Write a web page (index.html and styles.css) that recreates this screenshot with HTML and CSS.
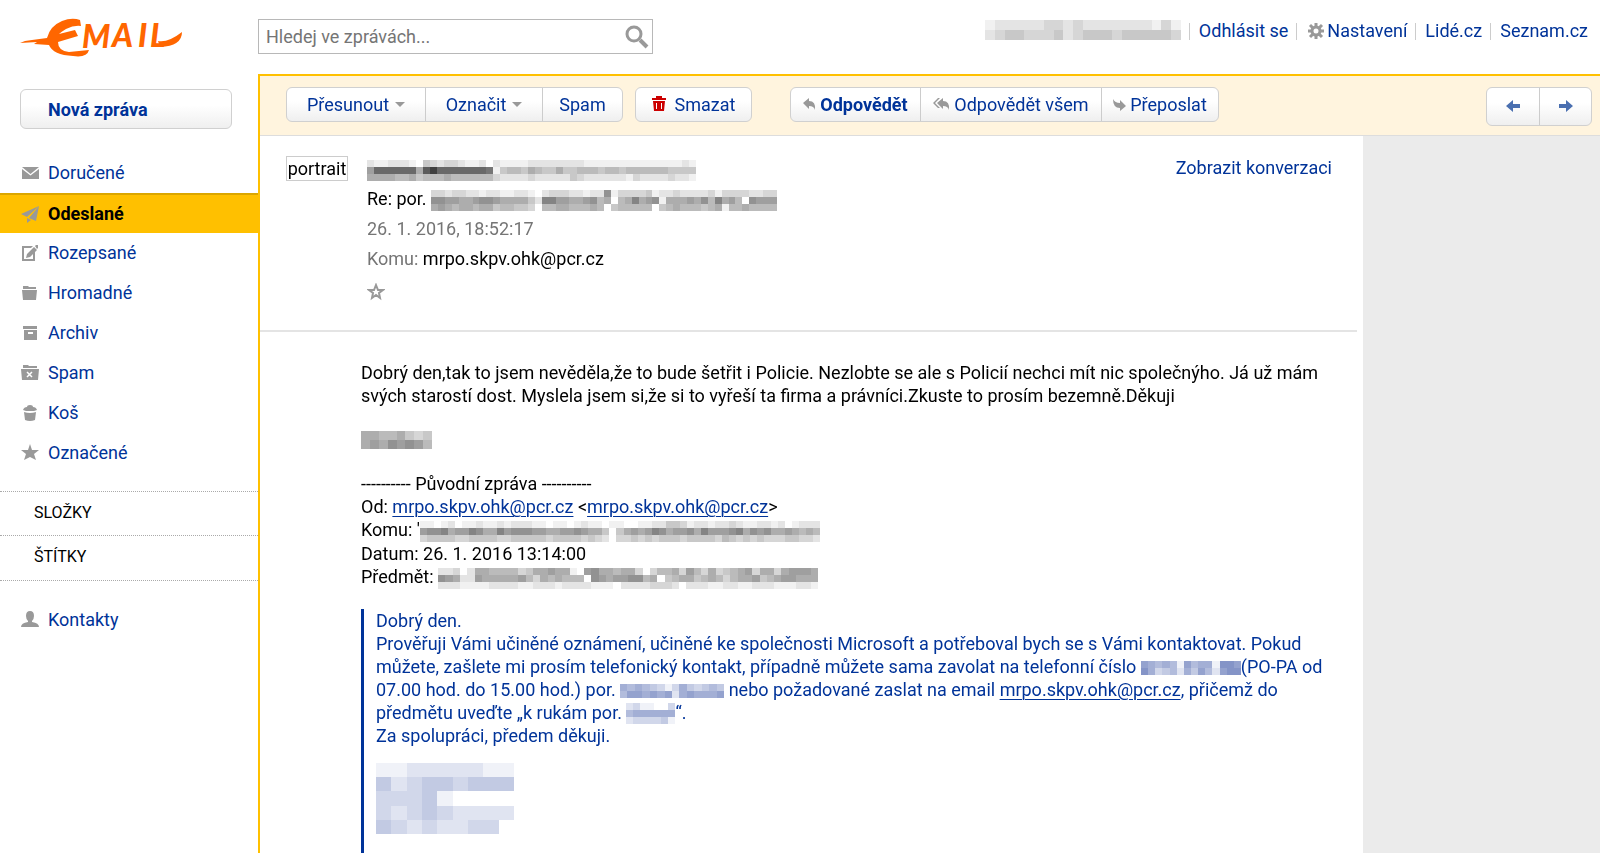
FILE: index.html
```
<!DOCTYPE html>
<html lang="cs">
<head>
    <meta charset="UTF-8">
    <meta name="viewport" content="width=device-width, initial-scale=1.0">
    <title>Odeslané - Email</title>
    <link rel="stylesheet" href="styles.css">
</head>
<body>
    <aside class="sidebar">
        <a class="logo" href="#" aria-label="Email">
            <svg width="164" height="44" viewBox="0 0 164 44" xmlns="http://www.w3.org/2000/svg">
                <path d="M0 28 L5 26 L12 25 L27 23 Q30 11 42 6 Q52 2 60 5 L61 11 Q54 10 46 14 Q41 17 39 19 L55 15 L58 21 L38 27 Q38 36 49 37 L69 35 Q67 43 53 41 Q33 40 29 30 L14 29 L17 27 Z"/>
                <text font-size="32"><tspan x="62" y="33">M</tspan><tspan x="92" y="32">A</tspan><tspan x="118" y="32">I</tspan><tspan x="130" y="32">L</tspan></text>
                <path d="M138 26 Q148 28 162 17 Q162 31 140 32 Z"/>
            </svg>
        </a>
        <button class="compose">Nová zpráva</button>
        <nav>
            <ul class="folders">
                <li><a href="#"><svg class="icon" viewBox="0 0 18 18"><path d="M1 3h17L9.500 10zM1 5l8.500 6.500L18 5v10H1z"/></svg>Doručené</a></li>
                <li class="active"><a href="#"><svg class="icon" viewBox="0 0 18 18"><path d="M0 9L18 1L6 12zM18 1L15 16L8 13zM6 13l4 2-4 3z"/></svg>Odeslané</a></li>
                <li><a href="#"><svg class="icon" viewBox="0 0 18 18"><path d="M1 2h11l-2 2H3v11h9V9l2-2v10H1zM5 14l1-4 7-7 3 3-7 7zM14 2l1-1h2v3l-1 1z"/></svg>Rozepsané</a></li>
                <li><a href="#"><svg class="icon" viewBox="0 0 18 18"><path d="M2 2h5l1 1h7v2H2zM1 6h15l-1 10H2z"/></svg>Hromadné</a></li>
                <li><a href="#"><svg class="icon" viewBox="0 0 18 18"><path d="M2 2h14v3H2z"/><path fill-rule="evenodd" d="M3 6h13v10H3zM7 8v2h5V8z"/></svg>Archiv</a></li>
                <li><a href="#"><svg class="icon" viewBox="0 0 18 18"><path d="M2 1h5l1 1h8v2H2zM0 5h18l-1 11H1z"/><path class="cut" d="M6 8l5 5M11 8l-5 5"/></svg>Spam</a></li>
                <li><a href="#"><svg class="icon" viewBox="0 0 18 18"><path d="M2 6q1-3 4-3 0-2 3-2t3 2q3 0 4 3l-3 1H5zM3 8q6 2 12 0l-1 8q-5 2-10 0z"/></svg>Koš</a></li>
                <li><a href="#"><svg class="icon" viewBox="0 0 18 18"><path d="M9 0l2 6h7l-5 4 2 6-6-3-6 3 2-6-5-4h7z"/></svg>Označené</a></li>
            </ul>
            <a class="section" href="#">SLOŽKY</a>
            <a class="section last" href="#">ŠTÍTKY</a>
            <ul class="folders">
                <li><a href="#"><svg class="icon" viewBox="0 0 18 18"><path d="M5 5q0-5 4-5t4 5q0 3-2 5v1q7 1 7 5H0q0-4 7-5v-1Q5 8 5 5z"/></svg>Kontakty</a></li>
            </ul>
        </nav>
    </aside>

    <div class="page">
        <header class="topbar">
            <form class="search">
                <input type="text" placeholder="Hledej ve zprávách..." aria-label="Hledej ve zprávách">
                <button type="button" aria-label="Hledat">
                    <svg width="24" height="24" viewBox="0 0 24 24"><circle cx="9" cy="9" r="7"/><path class="handle" d="M15 15l7 7"/></svg>
                </button>
            </form>
            <div class="user-links">
                <canvas class="mosaic user" data-rows="12222233232222222131|23443334234443444443"></canvas>
                <a href="#">Odhlásit se</a>
                <a href="#"><svg class="gear" viewBox="0 0 16 16"><circle cx="8" cy="8" r="4"/><path d="M8 0v4M8 12v4M0 8h4M12 8h4M2 2l3 3M11 11l3 3M14 2l-3 3M5 11l-3 3"/></svg>Nastavení</a>
                <a href="#">Lidé.cz</a>
                <a href="#">Seznam.cz</a>
            </div>
        </header>

        <main>
            <div class="toolbar">
                <div class="group">
                    <button class="move">Přesunout<i class="caret"></i></button>
                    <button class="mark">Označit<i class="caret"></i></button>
                    <button class="spam">Spam</button>
                </div>
                <div class="group">
                    <button class="delete"><svg width="14" height="16" viewBox="0 0 14 16"><path d="M0 2h4V0h6v2h4v2H0z"/><path fill-rule="evenodd" d="M1 5h12l-1 10H2zM4 7v6h1V7zM9 7v6h1V7z"/></svg>Smazat</button>
                </div>
                <div class="group replies">
                    <button class="reply"><svg width="13" height="13" viewBox="0 0 13 13"><path d="M0 5l6-5v3q7 0 6 9-1-4-6-4v3z"/></svg>Odpovědět</button>
                    <button class="reply-all"><svg width="17" height="13" viewBox="0 0 17 13"><path d="M4 5l6-5v3q7 0 6 9-1-4-6-4v3z"/><path d="M5 0h2L2 5l5 5H5L0 5z"/></svg>Odpovědět všem</button>
                    <button class="forward"><svg width="13" height="13" viewBox="0 0 13 13"><path d="M13 8l-6 5v-3Q0 10 0 1q2 4 7 4V2z"/></svg>Přeposlat</button>
                </div>
                <div class="group pager">
                    <button aria-label="Předchozí"><svg width="14" height="12" viewBox="0 0 14 12"><path d="M0 6l7-6v4h7v4H7v4z"/></svg></button>
                    <button aria-label="Další"><svg width="14" height="12" viewBox="0 0 14 12"><path d="M14 6L7 0v4H0v4h7v4z"/></svg></button>
                </div>
            </div>

            <div class="content">
                <article class="message">
                    <div class="message-head">
                        <div class="portrait">portrait</div>
                        <div class="meta">
                            <div><canvas class="mosaic sender" data-rows="21122210432332112021111222222221111111111111121|7bbbbbb6cebbbbbbba1455465446445554554555555444432|66665564555655555532222322222432222221322223221"></canvas></div>
                            <div>Re: por. <canvas class="mosaic subject" data-rows="33233221221122102333221228133334122322223133332233|88776678876666429977667856056967816667685967508777|67656656645544305566555650455555045655545615565555"></canvas></div>
                            <div class="muted">26. 1. 2016, 18:52:17</div>
                            <div><span class="muted">Komu:</span> mrpo.skpv.ohk@pcr.cz</div>
                            <button class="star" aria-label="Označit hvězdičkou"><svg width="18" height="18" viewBox="0 0 18 18"><path d="M9 2l2 5h5l-4 3 1 5-4-3-4 3 1-5-4-3h5z"/></svg></button>
                        </div>
                        <a class="conversation" href="#">Zobrazit konverzaci</a>
                    </div>

                    <div class="message-body">
                        <p>Dobrý den,tak to jsem nevěděla,že to bude šetřit i Policie. Nezlobte se ale s Policií nechci mít nic společnýho. Já už mám<br>
                        svých starostí dost. Myslela jsem si,že si to vyřeší ta firma a právníci.Zkuste to prosím bezemně.Děkuji</p>
                        <p class="signed"><canvas class="mosaic name" data-rows="66556434|67687875"></canvas></p>
                        <p>---------- Původní zpráva ----------<br>
                        Od: <a href="#">mrpo.skpv.ohk@pcr.cz</a> &lt;<a href="#">mrpo.skpv.ohk@pcr.cz</a>&gt;<br>
                        Komu: '<canvas class="mosaic recipient" data-rows="110120112112122211011012110110011224431221223211221201222|788967798669788877667787664046767986778697778968786676565|344443344443344444344443432033434344434444354343433344332"></canvas><br>
                        Datum: 26. 1. 2016 13:14:00<br>
                        Předmět: <canvas class="mosaic original" data-rows="2230266555534667661078665663035563753634567366367776|8762276666675365655508767788560456645653566745677666|2221111222211222122221110222233320222112211222111221222"></canvas></p>
                        <blockquote>
                            <p>Dobrý den.<br>
                            Prověřuji Vámi učiněné oznámení, učiněné ke společnosti Microsoft a potřeboval bych se s Vámi kontaktovat. Pokud<br>
                            můžete, zašlete mi prosím telefonický kontakt, případně můžete sama zavolat na telefonní číslo <canvas class="mosaic blue phone" data-rows="76565175661887|86345264752788"></canvas>(PO-PA od<br>
                            07.00 hod. do 15.00 hod.) por. <canvas class="mosaic blue officer" data-rows="65654313643454|577676726766676"></canvas> nebo požadované zaslat na email <a href="#">mrpo.skpv.ohk@pcr.cz</a>, přičemž do<br>
                            předmětu uveďte „k rukám por. <canvas class="mosaic blue surname" data-rows="2311003|5666666|2333341"></canvas>“.<br>
                            Za spolupráci, předem děkuji.</p>
                            <canvas class="mosaic blue signature" data-rows="112222211|423443444|333410000|323432222|432322330"></canvas>
                        </blockquote>
                    </div>
                </article>
            </div>
        </main>
    </div>

    <script src="script.js"></script>
</body>
</html>
```
FILE: styles.css
```
* {
    box-sizing: border-box;
}

body {
    margin: 0;
    display: flex;
    min-height: 100vh;
    background: #fff;
    color: #000;
    font-family: Roboto, "Liberation Sans", sans-serif;
    font-size: 18px;
    line-height: 23px;
}

a {
    color: #039;
    text-decoration: none;
}

button {
    font: inherit;
    color: #039;
    cursor: pointer;
}

ul,
p,
blockquote {
    margin: 0;
    padding: 0;
}

/* Sidebar */
.sidebar {
    flex: 0 0 258px;
    padding-top: 15px;
}

.logo {
    display: block;
    height: 44px;
    margin-left: 20px;
}

.logo svg {
    overflow: visible;
    fill: #f60;
    font-family: Lato, sans-serif;
    font-weight: 900;
    font-style: italic;
}

.compose {
    display: block;
    width: 212px;
    height: 40px;
    margin: 30px 0 24px 20px;
    padding: 0 27px;
    border: 1px solid #d0d0d0;
    border-radius: 6px;
    background: linear-gradient(#fff 40%, #efefef);
    font-weight: bold;
    text-align: left;
}

.folders {
    list-style: none;
}

.folders a {
    display: flex;
    align-items: center;
    gap: 9px;
    height: 40px;
    padding: 0 0 1px 21px;
}

.folders .active a {
    background: #ffc000;
    border-top: 2px solid #dba600;
    color: #000;
    font-weight: bold;
}

.icon {
    width: 18px;
    height: 18px;
    fill: #999;
}

.icon .cut {
    stroke: #fff;
    stroke-width: 1.5;
}

.section {
    display: block;
    height: 44px;
    padding: 9px 0 0 34px;
    border-top: 1px dotted #aaa;
    color: #000;
    font-size: 16px;
}

.folders + .section {
    margin-top: 18px;
}

.section.last {
    height: 46px;
    border-bottom: 1px dotted #aaa;
    margin-bottom: 19px;
}

/* Top bar */
.page {
    flex: 1;
    display: flex;
    flex-direction: column;
    min-width: 0;
}

.topbar {
    display: flex;
    justify-content: space-between;
    height: 74px;
    padding: 19px 12px 0 0;
}

.search {
    display: flex;
    width: 395px;
    height: 35px;
    border: 1px solid #b8b8b8;
}

.search input {
    flex: 1;
    min-width: 0;
    padding: 0 7px;
    border: 0;
    outline: none;
    font: inherit;
}

.search input::placeholder {
    color: #757575;
}

.search button {
    width: 30px;
    padding: 5px 0 0;
    border: 0;
    background: none;
}

.search svg {
    fill: none;
    stroke: #999;
    stroke-width: 3;
}

.search .handle {
    stroke-width: 4;
}

.user-links {
    display: flex;
    height: 24px;
}

.user-links a {
    display: flex;
    align-items: center;
    line-height: 24px;
}

.user-links a::before {
    content: "";
    width: 1px;
    height: 17px;
    margin: 0 9px 0 8px;
    background: #ccc;
}

.gear {
    width: 16px;
    height: 16px;
    margin: 0 3px 0 2px;
    fill: none;
    stroke: #999;
    stroke-width: 3;
}

/* Toolbar */
main {
    flex: 1;
    display: flex;
    flex-direction: column;
    border-top: 2px solid #ffc000;
    border-left: 2px solid #ffc000;
}

.toolbar {
    display: flex;
    gap: 12px;
    height: 60px;
    padding: 11px 8px 0 26px;
    background: #fff4de;
    border-bottom: 1px solid #ddd;
}

.group {
    display: flex;
    height: 35px;
    border: 1px solid #d0d0d0;
    border-radius: 6px;
    background: linear-gradient(#fff 40%, #efefef);
}

.group button {
    display: flex;
    align-items: center;
    justify-content: center;
    padding: 0 0 1px;
    border: 0;
    background: none;
    white-space: nowrap;
}

.group button + button {
    border-left: 1px solid #ccc;
}

.group svg {
    fill: #999;
}

.move {
    width: 138px;
}

.mark {
    width: 117px;
}

.spam {
    width: 80px;
}

.group .delete {
    width: 115px;
    gap: 9px;
}

.group .delete svg {
    fill: #c00;
}

.replies {
    margin-left: 26px;
}

.replies button {
    gap: 4px;
}

.reply {
    width: 129px;
    font-weight: bold;
}

.reply-all {
    width: 181px;
}

.forward {
    width: 117px;
}

.caret {
    margin-left: 6px;
    border: 5px solid transparent;
    border-top-color: #999;
    border-bottom: 0;
}

.pager {
    height: 39px;
    margin-left: auto;
}

.pager button {
    width: 52px;
}

.group.pager svg {
    fill: #4a6fb0;
}

/* Message */
.content {
    flex: 1;
    display: flex;
    padding-right: 237px;
    background: linear-gradient(#ebebeb, #ebebeb) right / 237px 100% no-repeat;
}

.message {
    flex: 1;
    display: flex;
    flex-direction: column;
    min-width: 0;
}

.message-head {
    display: flex;
    align-items: flex-start;
    height: 196px;
    margin-right: 6px;
    padding: 20px 25px 0 26px;
    border-bottom: 2px solid #e4e4e4;
}

.portrait {
    width: 62px;
    height: 25px;
    border: 1px solid #ccc;
    text-align: center;
    white-space: nowrap;
}

.meta {
    flex: 1;
    margin: -2px 0 0 19px;
    line-height: 30px;
}

.muted {
    color: #757575;
}

.star {
    display: block;
    margin-top: 9px;
    padding: 0;
    border: 0;
    background: none;
}

.star svg {
    display: block;
    fill: none;
    stroke: #999;
    stroke-width: 2;
}

.message-body {
    flex: 1;
    display: flex;
    flex-direction: column;
    padding: 29px 20px 0 101px;
    white-space: nowrap;
}

.message-body p a {
    text-decoration: underline;
    text-decoration-thickness: 1px;
    text-underline-offset: 3px;
}

.message-body .signed {
    margin: 20px 0 22px;
}

blockquote {
    flex: 1;
    margin-top: 20px;
    padding-left: 12px;
    border-left: 3px solid #039;
    color: #039;
}

/* Pixelated names and addresses */
.mosaic {
    image-rendering: pixelated;
    vertical-align: middle;
    height: 21px;
}

.user {
    width: 196px;
    height: 20px;
    margin-top: 1px;
}

.sender {
    width: 329px;
}

.subject {
    width: 346px;
}

.name {
    width: 71px;
    height: 18px;
}

.recipient {
    width: 400px;
}

.original {
    width: 380px;
}

.phone {
    width: 100px;
    height: 14px;
}

.officer {
    width: 104px;
    height: 14px;
}

.surname {
    width: 49px;
}

.signature {
    display: block;
    width: 138px;
    height: 71px;
    margin-top: 16px;
}
```
FILE: script.js
```
// each row is a string of hex digits, one per cell: 0 is white, f is darkest
function paintMosaic(canvas) {
    const rows = canvas.dataset.rows.split('|');
    const ink = canvas.classList.contains('blue') ? [25, 55, 150] : [50, 50, 50];
    canvas.width = rows[0].length;
    canvas.height = rows.length;
    const ctx = canvas.getContext('2d');

    rows.forEach((row, y) => {
        [...row].forEach((digit, x) => {
            const strength = parseInt(digit, 16) / 15;
            const color = ink.map(c => Math.round(255 - (255 - c) * strength));
            ctx.fillStyle = `rgb(${color.join(',')})`;
            ctx.fillRect(x, y, 1, 1);
        });
    });
}

document.querySelectorAll('.mosaic').forEach(paintMosaic);
```
